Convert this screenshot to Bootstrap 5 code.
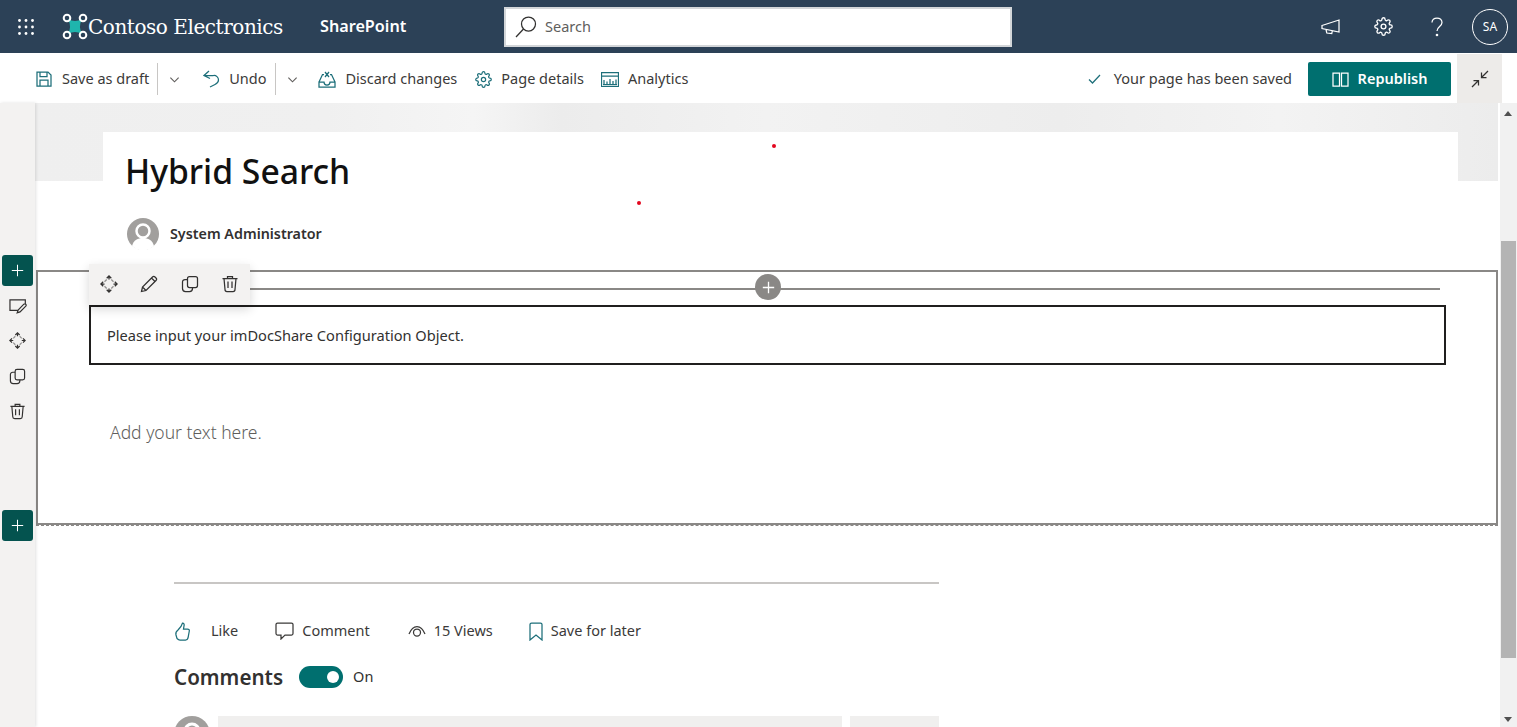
<!DOCTYPE html>
<html lang="en">
<head>
  <meta charset="UTF-8">
  <meta name="viewport" content="width=device-width, initial-scale=1.0">
  <link href="https://cdn.jsdelivr.net/npm/bootstrap@5.3.0/dist/css/bootstrap.min.css" rel="stylesheet">
  <style>
    body { font-family: "Noto Sans", "Liberation Sans", sans-serif; font-size: 14.5px; color: #323130; height: 727px; overflow: hidden; background: #fff; }
    svg { display: block; flex: none; fill: none; stroke-width: 1.25; }

    /* suite bar */
    .suite-bar { height: 53px; background: #2c4157; color: #fff; padding: 0; }
    .suite-bar svg { stroke: #fff; }
    .waffle { width: 52px; }
    .logo-mark { margin-left: 10px; }
    .logo-name { font-family: "DejaVu Serif", serif; font-size: 20px; letter-spacing: -.45px; width: 232px; }
    .app-name { font-weight: 600; font-size: 16.200px; width: 184px; }
    .search-box { width: 508px; height: 40px; background: #fff; border: 2px solid #d3d6d9; padding-left: 8px; color: #605e5c; gap: 7px; }
    .search-box svg { stroke: #323130; }
    .suite-icon { width: 53px; }
    .me-circle { width: 36px; height: 36px; border: 1px solid #fff; border-radius: 50%; font-size: 12px; margin: 0 9px 0 9px; }

    /* command bar */
    .cmd-bar { height: 50px; padding: 2px 0 0 36px; background: #fff; }
    .cmd-bar svg { stroke: #1d6f7a; }
    .cmd-text { color: #3b3a39; white-space: nowrap; }
    .cmd-sep { width: 1px; height: 32px; background: #c8c6c4; margin-left: 8px; }
    .republish { width: 143px; height: 34px; background: #006f6f; color: #fff; font-weight: 600; border-radius: 2px; font-size: 14.5px; gap: 9px; }
    .republish svg { stroke: #fff; }
    .collapse-cell { width: 45px; height: 49px; background: #edebe9; margin: -1px 15px 0 6px; align-self: flex-start; }

    /* page area */
    .page-area { height: 624px; }
    .left-rail { width: 35px; background: #f3f2f1; box-shadow: 1px 0 3px rgba(0,0,0,.12); padding: 152px 0 0 2px; z-index: 2; flex: none; }
    .rail-add { width: 31px; height: 31px; background: #04534f; border-radius: 3px; }
    .rail-add svg { stroke: #fff; }
    .rail-icon { width: 31px; height: 35.300px; }
    .rail-icon svg, .tool-strip svg { stroke: #323130; }
    .canvas { width: 1463px; flex: none; overflow: hidden; }
    .hero { height: 78px; padding: 29px 40px 0 68px; background: linear-gradient(90deg, #efefef 0%, #f0f0f0 20%, #f5f5f5 30%, #ececec 36%, #f2f2f2 50%, #ededed 70%, #f3f3f3 85%, #ececec 100%); }
    .title-box { height: 49px; background: #fff; padding: 19px 0 0 22px; }
    .title-box h1 { font-size: 33.700px; line-height: 40px; font-weight: 500; color: #111; margin: 0; }
    .byline { height: 89px; padding: 37px 0 0 92px; font-weight: 600; font-size: 14.300px; gap: 11px; }
    .edit-section { height: 255px; margin-left: 1px; border: 2px solid #8a8886; position: relative; padding: 33px 50px 0 51px; }
    .edit-section::after { content: ""; position: absolute; left: -2px; right: -2px; bottom: -3px; border-bottom: 1px dashed #8a8886; }
    .add-line { position: absolute; left: 212px; right: 56px; top: 16px; height: 2px; background: #8a8886; }
    .add-round { position: absolute; left: 717px; top: 2px; width: 26px; height: 26px; border-radius: 50%; background: #8a8886; }
    .add-round svg { stroke: #fff; stroke-width: 1.6; }
    .tool-strip { position: absolute; left: 51px; top: -8px; width: 161px; height: 41px; background: #f3f2f1; box-shadow: 0 4px 10px rgba(0,0,0,.16); padding: 0 11px 2px; z-index: 2; }
    .part-box { height: 60px; border: 2px solid #201f1e; padding: 2px 0 0 16px; color: #323130; font-size: 14.600px; }
    .add-text { font-size: 17.500px; font-weight: 300; color: #605e5c; margin: 54px 0 0 21px; }
    .foot-block { width: 765px; margin-left: 139px; padding-top: 57px; }
    .foot-rule { height: 2px; background: #c8c6c4; }
    .social-row { margin-top: 37px; height: 20px; color: #3b3a39; }
    .social-row svg { stroke: #1d6f7a; }
    .comments-row { margin-top: 24px; height: 24px; }
    .comments-row h2 { font-size: 20.600px; font-weight: 600; margin: 0; color: #323130; }
    .toggle-on { width: 44px; height: 22px; border-radius: 11px; background: #006f6f; position: relative; margin: 0 10px 0 16px; }
    .toggle-on::after { content: ""; position: absolute; right: 4px; top: 5px; width: 12px; height: 12px; border-radius: 50%; background: #fff; }
    .reply-row { margin-top: 27px; }
    .reply-input { width: 624px; height: 60px; background: #f0efee; margin-left: 8px; }
    .reply-btn { width: 89px; height: 60px; background: #f0efee; margin-left: 8px; }

    /* scrollbar */
    .scroll-track { width: 17px; margin-left: 2px; background: #f1f1f1; flex: none; padding: 0 1px; }
    .scroll-thumb { height: 417px; background: #b4b4b4; margin-top: 138px; }
    .arrow-up, .arrow-down { position: absolute; left: 1504px; width: 0; height: 0; border-left: 4px solid transparent; border-right: 4px solid transparent; }
    .arrow-up { top: 111px; border-bottom: 5px solid #505050; }
    .arrow-down { top: 717px; border-top: 5px solid #505050; }
    .red-dot { position: absolute; width: 4px; height: 4px; border-radius: 50%; background: #e3061e; z-index: 3; }
  </style>
  <title>Hybrid Search</title>
</head>
<body>
  <svg width="0" height="0" class="position-absolute">
    <symbol id="i-gear" viewBox="0 0 24 24">
      <g stroke-width="1.7">
      <circle cx="12" cy="12" r="3"/>
      <path d="M19.4 15a1.65 1.65 0 0 0 .33 1.82l.06.06a2 2 0 0 1 0 2.83 2 2 0 0 1-2.83 0l-.06-.06a1.65 1.65 0 0 0-1.82-.33 1.65 1.65 0 0 0-1 1.51V21a2 2 0 0 1-2 2 2 2 0 0 1-2-2v-.09A1.65 1.65 0 0 0 9 19.4a1.65 1.65 0 0 0-1.82.33l-.06.06a2 2 0 0 1-2.83 0 2 2 0 0 1 0-2.83l.06-.06a1.65 1.65 0 0 0 .33-1.82 1.65 1.65 0 0 0-1.51-1H3a2 2 0 0 1-2-2 2 2 0 0 1 2-2h.09A1.65 1.65 0 0 0 4.6 9a1.65 1.65 0 0 0-.33-1.82l-.06-.06a2 2 0 0 1 0-2.83 2 2 0 0 1 2.83 0l.06.06a1.65 1.65 0 0 0 1.82.33H9a1.65 1.65 0 0 0 1-1.51V3a2 2 0 0 1 2-2 2 2 0 0 1 2 2v.09a1.65 1.65 0 0 0 1 1.51 1.65 1.65 0 0 0 1.82-.33l.06-.06a2 2 0 0 1 2.83 0 2 2 0 0 1 0 2.83l-.06.06a1.65 1.65 0 0 0-.33 1.82V9a1.65 1.65 0 0 0 1.51 1H21a2 2 0 0 1 2 2 2 2 0 0 1-2 2h-.09a1.65 1.65 0 0 0-1.51 1z"/>
      </g>
    </symbol>
    <symbol id="i-chev" viewBox="0 0 12 12"><path d="M1.5 4l4.5 4.5L10.5 4"/></symbol>
    <symbol id="i-plus" viewBox="0 0 16 16"><path d="M8 1v14M1 8h14"/></symbol>
    <symbol id="i-move" viewBox="0 0 18 18">
      <path d="M9 1v3.500M9 17v-3.500M1 9h3.500M17 9h-3.500M6.700 3.200L9 .9l2.300 2.300M6.700 14.800L9 17.100l2.300-2.300M3.200 6.700L.9 9l2.300 2.300M14.800 6.700L17.100 9l-2.300 2.300"/>
      <path d="M11.300 4.500l2.200 2.200M13.500 11.300l-2.200 2.200M6.700 13.500l-2.200-2.200M4.500 6.700l2.200-2.200" stroke-opacity=".5"/>
    </symbol>
    <symbol id="i-copy" viewBox="0 0 18 18">
      <rect x="6.500" y="1.500" width="10" height="11" rx="2"/>
      <path d="M6.500 4.500H4a2.500 2.500 0 0 0-2.500 2.500v6.500A3 3 0 0 0 4.500 16.500h4a3 3 0 0 0 3-3v-1"/>
    </symbol>
    <symbol id="i-trash" viewBox="0 0 18 18">
      <path d="M1.500 3.500h15M6.500 3.500V1.500h5v2M3 3.500l1 11a2 2 0 0 0 2 2h6a2 2 0 0 0 2-2l1-11M7 6.500v6.500M11 6.500v6.500"/>
    </symbol>
    <symbol id="i-pen" viewBox="0 0 18 18">
      <path d="M1.500 16.500l1-4.500L12.500 2a1.800 1.800 0 0 1 2.500 0l1 1a1.800 1.800 0 0 1 0 2.500L6 15.500zM2.500 12L6 15.500M11.500 3l3.500 3.500"/>
    </symbol>
  </svg>

  <!-- barra superior -->
  <nav class="navbar suite-bar d-flex flex-nowrap align-items-center">
    <div class="waffle d-flex justify-content-center">
      <svg width="18" height="18" viewBox="0 0 18 18" style="fill:#fff;stroke:none">
        <circle cx="2.500" cy="2.500" r="1.400"/><circle cx="9" cy="2.500" r="1.400"/><circle cx="15.500" cy="2.500" r="1.400"/>
        <circle cx="2.500" cy="9" r="1.400"/><circle cx="9" cy="9" r="1.400"/><circle cx="15.500" cy="9" r="1.400"/>
        <circle cx="2.500" cy="15.500" r="1.400"/><circle cx="9" cy="15.500" r="1.400"/><circle cx="15.500" cy="15.500" r="1.400"/>
      </svg>
    </div>
    <svg class="logo-mark" width="26" height="27" viewBox="0 0 26 27">
      <path d="M6 6Q13 10 20 6Q16 13.500 20 21Q13 17 6 21Q10 13.500 6 6z" fill="#1fb5ad" stroke="none"/>
      <circle cx="5" cy="5" r="3.300" stroke-width="2"/><circle cx="21" cy="5" r="3.300" stroke-width="2"/>
      <circle cx="5" cy="22" r="3.300" stroke-width="2"/><circle cx="21" cy="22" r="3.300" stroke-width="2"/>
    </svg>
    <span class="logo-name">Contoso Electronics</span>
    <span class="app-name">SharePoint</span>
    <div class="search-box d-flex align-items-center">
      <svg width="24" height="24" viewBox="0 0 24 24"><circle cx="14.500" cy="9" r="7"/><path d="M9.500 14L2 22"/></svg>
      <span>Search</span>
    </div>
    <div class="ms-auto d-flex align-items-center">
      <div class="suite-icon d-flex justify-content-center">
        <svg width="20" height="18" viewBox="0 0 20 18"><path d="M1 7.500L18 2v12L1 10.500zM5 11.500l.8 3.500 5 .5.500-2.800"/></svg>
      </div>
      <div class="suite-icon d-flex justify-content-center"><svg width="19" height="19"><use href="#i-gear"/></svg></div>
      <div class="suite-icon d-flex justify-content-center">
        <svg width="12" height="20" viewBox="0 0 12 20"><path d="M1 5.500C1 3 3 1 6 1s5 2 5 4.500c0 4-5 4-5 8.500"/><circle cx="6" cy="18" r=".7"/></svg>
      </div>
      <div class="me-circle d-flex align-items-center justify-content-center">SA</div>
    </div>
  </nav>

  <!-- barra de comandos -->
  <div class="cmd-bar d-flex align-items-center">
    <svg width="16" height="16" viewBox="0 0 16 16"><path d="M1 1h11l3 3v11H1zM4 1v4.500h7V1M4 15V9h8v6"/></svg>
    <span class="cmd-text" style="margin-left:10px">Save as draft</span>
    <span class="cmd-sep"></span>
    <svg width="11" height="11" style="stroke:#605e5c;margin-left:11px"><use href="#i-chev"/></svg>
    <svg width="17" height="18" viewBox="0 0 17 18" style="margin-left:23px"><path d="M6 1L1 5.500l6 3M1 5.500h9.500A4.500 4.500 0 0 1 15.500 10c0 2-1.500 3.500-3.500 4.500L7 17"/></svg>
    <span class="cmd-text" style="margin-left:9px">Undo</span>
    <span class="cmd-sep"></span>
    <svg width="11" height="11" style="stroke:#605e5c;margin-left:11px"><use href="#i-chev"/></svg>
    <svg width="18" height="17" viewBox="0 0 18 17" style="margin-left:20px"><path d="M1 11L4.500 3.500h1.500M12 3.500h1.500L17 11M7 1l4 5M11 1L7 6M6 11H1v5h16v-5h-5a3 3 0 0 1-6 0z"/></svg>
    <span class="cmd-text" style="margin-left:10px">Discard changes</span>
    <svg width="17" height="17" style="margin-left:18px"><use href="#i-gear"/></svg>
    <span class="cmd-text" style="margin-left:9px">Page details</span>
    <svg width="18" height="15" viewBox="0 0 18 15" style="margin-left:17px"><path d="M.5.500h17v14H.5zM.5 4h17M3 12V8M6 12V9.500M9 12V7M12 12V9M15 12V7.500M2 12.500h14"/></svg>
    <span class="cmd-text" style="margin-left:9px">Analytics</span>

    <svg class="ms-auto" width="13" height="10" viewBox="0 0 13 10"><path d="M1 5.500L4.500 9 12 1"/></svg>
    <span class="cmd-text" style="margin-left:13px;margin-right:16px">Your page has been saved</span>
    <button type="button" class="btn republish d-flex align-items-center justify-content-center p-0">
      <svg width="17" height="15" viewBox="0 0 17 15"><path d="M1 1h6.500v13H1zM9.500 1H16v13H9.500z"/></svg>
      Republish
    </button>
    <div class="collapse-cell d-flex align-items-center justify-content-center">
      <svg width="18" height="18" viewBox="0 0 18 18" style="stroke:#323130"><path d="M10.500 7.500L17 1M10.500 2.500v5h5M7.500 10.500L1 17M2.500 10.500h5v5"/></svg>
    </div>
  </div>

  <!-- area da pagina -->
  <div class="page-area d-flex position-relative">
    <aside class="left-rail">
      <div class="rail-add d-flex align-items-center justify-content-center"><svg width="13" height="13"><use href="#i-plus"/></svg></div>
      <div class="rail-icon d-flex align-items-center justify-content-center" style="margin-top:2px">
        <svg width="18" height="18" viewBox="0 0 18 18"><path d="M10 14H1V3h16v5M8.500 16.500l1-3 6-6a1.200 1.200 0 0 1 2 2l-6 6z" transform="scale(.96)"/></svg>
      </div>
      <div class="rail-icon d-flex align-items-center justify-content-center"><svg width="17" height="17"><use href="#i-move"/></svg></div>
      <div class="rail-icon d-flex align-items-center justify-content-center"><svg width="17" height="17"><use href="#i-copy"/></svg></div>
      <div class="rail-icon d-flex align-items-center justify-content-center"><svg width="17" height="17"><use href="#i-trash"/></svg></div>
      <div class="rail-add d-flex align-items-center justify-content-center" style="margin-top:81px"><svg width="13" height="13"><use href="#i-plus"/></svg></div>
    </aside>

    <main class="canvas">
      <div class="hero">
        <div class="title-box"><h1>Hybrid Search</h1></div>
      </div>
      <div class="byline d-flex">
        <svg width="32" height="32" viewBox="0 0 32 32" style="stroke:none">
          <circle cx="16" cy="16" r="16" fill="#a19f9d"/>
          <circle cx="16" cy="13" r="6.500" fill="#a19f9d" stroke="#fff" stroke-width="2.500"/>
          <path d="M5 28c1.500-6 6-8 11-8s9.500 2 11 8a16 16 0 0 1-22 0z" fill="#fff"/>
        </svg>
        <span style="line-height:32px">System Administrator</span>
      </div>
      <section class="edit-section">
        <div class="add-line"></div>
        <div class="add-round d-flex align-items-center justify-content-center"><svg width="13" height="13"><use href="#i-plus"/></svg></div>
        <div class="tool-strip d-flex align-items-center justify-content-between">
          <svg width="18" height="18"><use href="#i-move"/></svg>
          <svg width="18" height="18"><use href="#i-pen"/></svg>
          <svg width="18" height="18"><use href="#i-copy"/></svg>
          <svg width="18" height="18"><use href="#i-trash"/></svg>
        </div>
        <div class="part-box d-flex align-items-center">Please input your imDocShare Configuration Object.</div>
        <p class="add-text">Add your text here.</p>
      </section>
      <div class="foot-block">
        <div class="foot-rule"></div>
        <div class="social-row d-flex align-items-center">
          <svg width="18" height="19" viewBox="0 0 18 19"><path d="M4 8l3-3.500L8.500 1c1.500 0 2 1.500 1.500 3L9.500 7h4c1.500 0 2 1 1.800 2l-1.300 7c-.3 1.200-1 2-2.500 2H6c-1.500 0-2-.5-3-1.500L2 13c-.5-2 .5-4 2-5z"/></svg>
          <span style="margin-left:19px">Like</span>
          <svg width="19" height="18" viewBox="0 0 19 18" style="margin-left:37px;stroke:#3b3a39"><path d="M2.500 1h14A1.500 1.500 0 0 1 18 2.500v9a1.500 1.500 0 0 1-1.500 1.500H10L6 17v-4H2.500A1.500 1.500 0 0 1 1 11.500v-9A1.500 1.500 0 0 1 2.500 1z"/></svg>
          <span style="margin-left:8px">Comment</span>
          <svg width="18" height="12" viewBox="0 0 18 12" style="margin-left:38px;stroke:#3b3a39"><path d="M1 9C3 4 6 1.500 9 1.500S15 4 17 9"/><circle cx="9" cy="7.500" r="3.500"/></svg>
          <span style="margin-left:8px">15 Views</span>
          <svg width="14" height="19" viewBox="0 0 14 19" style="margin-left:36px"><path d="M1 2.500A1.500 1.500 0 0 1 2.500 1h9A1.500 1.500 0 0 1 13 2.500V18l-6-5-6 5z"/></svg>
          <span style="margin-left:8px">Save for later</span>
        </div>
        <div class="comments-row d-flex align-items-center">
          <h2>Comments</h2>
          <div class="toggle-on"></div>
          <span>On</span>
        </div>
        <div class="reply-row d-flex">
          <svg width="36" height="36" viewBox="0 0 36 36" style="stroke:none">
            <circle cx="18" cy="18" r="18" fill="#a19f9d"/>
            <circle cx="18" cy="15" r="7" fill="#a19f9d" stroke="#fff" stroke-width="3"/>
          </svg>
          <div class="reply-input"></div>
          <div class="reply-btn"></div>
        </div>
      </div>
    </main>

    <div class="scroll-track"><div class="scroll-thumb"></div></div>
  </div>

  <span class="arrow-up"></span>
  <span class="arrow-down"></span>
  <span class="red-dot" style="left:772px;top:144px"></span>
  <span class="red-dot" style="left:637px;top:201px"></span>

  <script src="https://cdn.jsdelivr.net/npm/bootstrap@5.3.0/dist/js/bootstrap.bundle.min.js"></script>
</body>
</html>
